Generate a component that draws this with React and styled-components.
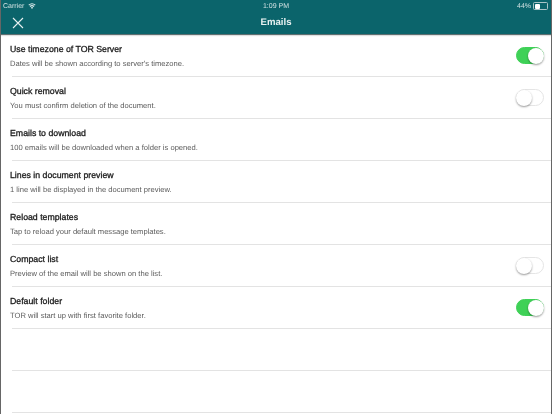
import React from "react";
import styled, { createGlobalStyle } from "styled-components";

const rows = [
  { title: "Use timezone of TOR Server", text: "Dates will be shown according to server's timezone.", on: true },
  { title: "Quick removal", text: "You must confirm deletion of the document.", on: false },
  { title: "Emails to download", text: "100 emails will be downloaded when a folder is opened." },
  { title: "Lines in document preview", text: "1 line will be displayed in the document preview." },
  { title: "Reload templates", text: "Tap to reload your default message templates." },
  { title: "Compact list", text: "Preview of the email will be shown on the list.", on: false },
  { title: "Default folder", text: "TOR will start up with first favorite folder.", on: true },
  {},
  {},
];

const Global = createGlobalStyle`
  html, body {
    margin: 0;
    padding: 0;
    background: #fff;
  }
  body {
    font-family: "Liberation Sans", Arial, sans-serif;
    text-rendering: geometricPrecision;
  }
`;

const Screen = styled.div`
  width: 552px;
  height: 414px;
  overflow: hidden;
  box-sizing: border-box;
  display: flex;
  flex-direction: column;
  background: #fff;
  border-left: 1px solid #666;
  border-right: 1px solid #666;
`;

const Header = styled.header`
  height: 35px;
  box-sizing: border-box;
  margin: 0 -1px;
  flex: none;
  background: #0b646b;
  border-bottom: 1px solid #5e6f71;
  box-shadow: 0 1px 1px rgba(0, 0, 0, 0.12);
  color: #fff;
  display: flex;
  flex-direction: column;
  will-change: transform;
`;

const StatusBar = styled.div`
  height: 12px;
  padding: 0 3px;
  display: grid;
  grid-template-columns: 1fr auto 1fr;
  align-items: center;
  font-size: 7px;
  color: #cfe0e1;
`;

const Carrier = styled.div`
  display: flex;
  align-items: center;
  gap: 4px;
`;

const Battery = styled.div`
  justify-self: end;
  display: flex;
  align-items: center;
  gap: 2px;
  padding-right: 1px;
`;

const BatteryShell = styled.div`
  width: 12px;
  height: 5px;
  padding: 0.5px;
  border: 0.5px solid #a9c5c7;
  border-radius: 1.5px;
  box-sizing: content-box;
`;

const BatteryLevel = styled.div`
  height: 100%;
  background: #fff;
  border-radius: 1px;
`;

const NavBar = styled.div`
  flex: 1;
  position: relative;
  display: flex;
  align-items: center;
  justify-content: center;
  padding-bottom: 1px;
  font-size: 9.6px;
  font-weight: bold;
  color: #e9f2f2;
`;

const CloseButton = styled.button`
  position: absolute;
  left: 12px;
  top: 5px;
  padding: 0;
  width: 12px;
  height: 12px;
  display: flex;
  border: 0;
  background: none;
  color: #e8f1f2;
`;

const List = styled.div`
  display: flex;
  flex-direction: column;
`;

const Row = styled.div`
  height: 42px;
  box-sizing: border-box;
  flex: none;
  margin-left: 11px;
  padding-right: 7px;
  border-bottom: 1px solid #e3e3e3;
  display: flex;
  align-items: center;
  justify-content: space-between;
`;

const RowText = styled.div`
  margin-left: -2px;
  display: flex;
  flex-direction: column;
  gap: 3px;
  will-change: transform;
`;

const Title = styled.div`
  font-size: 8.75px;
  line-height: 12px;
  color: #1c1c1c;
  -webkit-text-stroke: 0.3px #1c1c1c;
`;

const Description = styled.div`
  font-size: 7.6px;
  line-height: 11px;
  color: #5c5c5c;
`;

const Switch = styled.div`
  width: 28px;
  height: 17px;
  box-sizing: border-box;
  position: relative;
  border-radius: 9px;
  background: ${(p) => (p.$on ? "#3fd157" : "#fff")};
  border: 1px solid ${(p) => (p.$on ? "#3fd157" : "#e5e5e5")};
`;

const Knob = styled.div`
  position: absolute;
  top: -0.5px;
  left: ${(p) => (p.$on ? "11px" : "-1px")};
  width: 16px;
  height: 16px;
  border-radius: 50%;
  background: #fff;
  box-shadow: 0 1px 2px rgba(0, 0, 0, 0.4);
`;

const App = () => {
  return (
    <Screen>
      <Global />
      <Header>
        <StatusBar>
          <Carrier>
            Carrier
            <svg width="8" height="6" viewBox="0 0 18 14" fill="#dcebec">
              <path d="M9 14 6.2 10.6a4.5 4.5 0 0 1 5.6 0Z" />
              <path d="M5 9.2 3.4 7.2a8.8 8.8 0 0 1 11.2 0L13 9.2a6.3 6.3 0 0 0-8 0Z" />
              <path d="M2.3 6 .6 4a13 13 0 0 1 16.8 0l-1.7 2a10.4 10.4 0 0 0-13.4 0Z" />
            </svg>
          </Carrier>
          <span>1:09 PM</span>
          <Battery>
            44%
            <BatteryShell>
              <BatteryLevel style={{ width: "44%" }} />
            </BatteryShell>
          </Battery>
        </StatusBar>
        <NavBar>
          <CloseButton aria-label="Close">
            <svg width="12" height="12" viewBox="0 0 12 12" stroke="currentColor" strokeWidth="1.1" fill="none">
              <path d="M1 1 11 11M11 1 1 11" />
            </svg>
          </CloseButton>
          Emails
        </NavBar>
      </Header>
      <List>
        {rows.map((row, i) => (
          <Row key={i}>
            <RowText>
              {row.title && <Title>{row.title}</Title>}
              {row.text && <Description>{row.text}</Description>}
            </RowText>
            {row.on !== undefined && (
              <Switch $on={row.on}>
                <Knob $on={row.on} />
              </Switch>
            )}
          </Row>
        ))}
      </List>
    </Screen>
  );
};

export default App;
